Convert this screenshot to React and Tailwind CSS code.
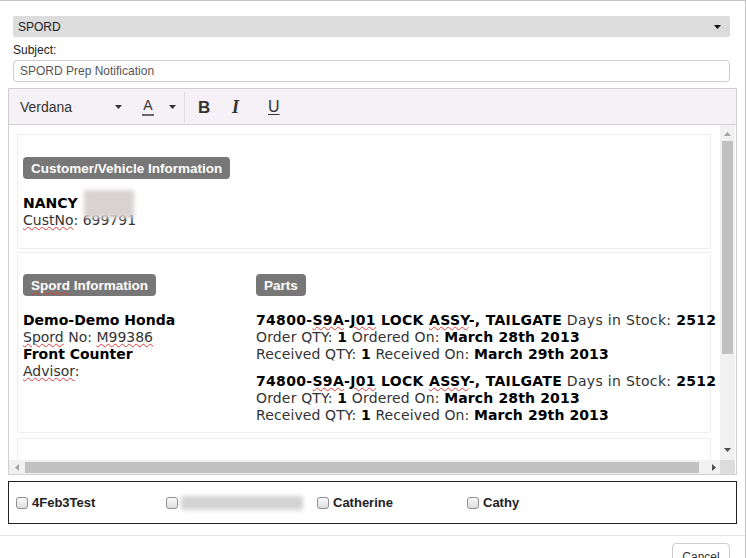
import React from "react";

const Sp = ({ children }) => (
  <span className="underline decoration-wavy decoration-[#e23b3b] decoration-[0.5px] underline-offset-[1px]">{children}</span>
);

const Caret = ({ color = "#333" }) => (
  <svg width="7" height="4" viewBox="0 0 7 4" className="block">
    <path d="M0 0h7L3.5 4z" fill={color} />
  </svg>
);

const Badge = ({ children, className = "" }) => (
  <div className={"inline-flex h-[22px] items-center rounded-[4px] bg-[#777] px-[8px] font-['Liberation_Sans',Arial,sans-serif] text-[13.5px] font-bold text-white " + className}>
    {children}
  </div>
);

const Part = ({ className = "" }) => (
  <div className={"whitespace-nowrap " + className}>
    <div className="tracking-[0.32px]">
      <b className="text-black">74800-<Sp>S9A</Sp>-<Sp>J01</Sp> LOCK <Sp>ASSY</Sp>-, TAILGATE</b> Days in Stock: <b className="text-black">2512</b>
    </div>
    <div className="tracking-[0.15px]">
      Order QTY: <b className="text-black">1</b> Ordered On: <b className="text-black">March 28th 2013</b>
    </div>
    <div className="tracking-[0.1px]">
      Received QTY: <b className="text-black">1</b> Received On: <b className="text-black">March 29th 2013</b>
    </div>
  </div>
);

const Check = ({ children }) => (
  <div className="flex w-[150px] items-center">
    <span className="h-[12px] w-[12px] rounded-[3px] border border-[#8f8f8f] bg-gradient-to-b from-[#fafafa] to-[#dedede]" />
    <span className="ml-[4px] text-[13px] font-bold text-[#222]">{children}</span>
  </div>
);

export default function App() {
  return (
    <div className="h-[558px] w-[746px] overflow-hidden border-r border-t border-[#c4c4c4] bg-white font-['Liberation_Sans',Arial,sans-serif] text-[12px] text-[#333]">
      <div className="ml-[13px] mr-[15px] mt-[15px]">
        <div className="flex h-[21px] items-center justify-between rounded-[2px] bg-[#dcdcdd] pl-[5px] pr-[9px] text-[#222]">
          <span>SPORD</span>
          <Caret color="#111" />
        </div>
        <div className="mt-[6px] h-[14px] leading-[14px] text-[#222]">Subject:</div>
        <div className="mt-[3px] flex h-[22px] items-center rounded-[4px] border border-[#ccc] pl-[6px] text-[#555]">
          SPORD Prep Notification
        </div>
      </div>

      <div className="ml-[8px] mt-[6px] w-[729px] border border-[#cfcfcf]">
        <div className="flex h-[36px] items-center border-b border-[#d0d0d0] bg-[#f6f1f6] pt-[1px] text-[#333]">
          <span className="ml-[11px] w-[95px] text-[14px]">Verdana</span>
          <Caret />
          <span className="ml-[21px] flex w-[10px] flex-col items-center">
            <span className="text-[14px] leading-[15px]">A</span>
            <span className="mt-[1px] h-[2px] w-[12px] bg-[#666]" />
          </span>
          <span className="ml-[16px]"><Caret /></span>
          <span className="ml-[8px] h-[30px] w-px bg-[#ddd]" />
          <span className="ml-[13px] w-[10px] text-[17px] font-bold leading-none">B</span>
          <span className="ml-[24px] w-[12px] font-['Liberation_Serif',serif] text-[18px] font-bold italic leading-none">I</span>
          <span className="ml-[24px] text-[16px] leading-none underline underline-offset-[2px]">U</span>
        </div>

        <div className="grid h-[349px] grid-cols-[711px_15px] grid-rows-[335px_14px] bg-white">
          <div className="overflow-hidden pl-[8px] pt-[9px] font-['DejaVu_Sans',Verdana,sans-serif] text-[14px] leading-[17px] text-[#333]">
            <div className="w-[694px] border border-[#eee] pb-[19px] pl-[5px] pt-[22px]">
              <Badge>Customer/Vehicle Information</Badge>
              <div className="mt-[16px] flex items-center">
                <b className="text-black">NANCY</b>
                <span className="-my-[6px] ml-[6px] h-[28px] w-[50px] bg-[#d9d2d3] blur-[2px]" />
              </div>
              <div><Sp>CustNo</Sp>: 699791</div>
            </div>

            <div className="mt-[3px] grid w-[694px] grid-cols-[233px_1fr] border border-[#eee] pb-[8px] pl-[5px] pt-[21px]">
              <div>
                <Badge><Sp>Spord</Sp>&nbsp;Information</Badge>
                <div className="mt-[16px]">
                  <div><b className="text-black">Demo-Demo Honda</b></div>
                  <div><Sp>Spord</Sp> No: <Sp>M99386</Sp></div>
                  <div><b className="text-black">Front Counter</b></div>
                  <div><Sp>Advisor</Sp>:</div>
                </div>
              </div>
              <div>
                <Badge>Parts</Badge>
                <Part className="mt-[16px]" />
                <Part className="mt-[10px]" />
              </div>
            </div>

            <div className="mt-[5px] h-[40px] w-[694px] border border-[#eee]" />
          </div>

          <div className="flex flex-col items-center bg-[#f1f1f1]">
            <svg width="7" height="4" viewBox="0 0 7 4" className="mt-[7px]">
              <path d="M3.5 0L7 4H0z" fill="#a3a3a3" />
            </svg>
            <div className="mt-[5px] h-[213px] w-[11px] bg-[#c1c1c1]" />
            <div className="flex-1" />
            <svg width="7" height="4" viewBox="0 0 7 4" className="mb-[8px]">
              <path d="M0 0h7L3.5 4z" fill="#505050" />
            </svg>
          </div>

          <div className="flex items-center bg-[#f1f1f1]">
            <svg width="4" height="7" viewBox="0 0 4 7" className="ml-[6px]">
              <path d="M4 0v7L0 3.5z" fill="#a3a3a3" />
            </svg>
            <div className="ml-[6px] h-[11px] w-[674px] bg-[#c1c1c1]" />
            <svg width="4" height="7" viewBox="0 0 4 7" className="ml-[13px]">
              <path d="M0 0v7L4 3.5z" fill="#505050" />
            </svg>
          </div>
          <div className="bg-[#dcdcdc]" />
        </div>
      </div>

      <div className="ml-[8px] mt-[6px] flex h-[43px] w-[729px] items-center border border-[#222] pl-[7px]">
        <Check>4Feb3Test</Check>
        <div className="flex w-[151px] items-center">
          <span className="h-[12px] w-[12px] rounded-[3px] border border-[#8f8f8f] bg-gradient-to-b from-[#fafafa] to-[#dedede]" />
          <span className="ml-[3px] h-[14px] w-[122px] bg-[#d3d3d3] blur-[2px]" />
        </div>
        <Check>Catherine</Check>
        <Check>Cathy</Check>
      </div>

      <div className="mt-[11px] border-t border-[#e5e5e5] pt-[7px]">
        <div className="ml-auto mr-[15px] flex h-[28px] w-[58px] items-center justify-center rounded-[4px] border border-[#ccc] bg-white text-[12px] text-[#333]">
          Cancel
        </div>
      </div>
    </div>
  );
}
